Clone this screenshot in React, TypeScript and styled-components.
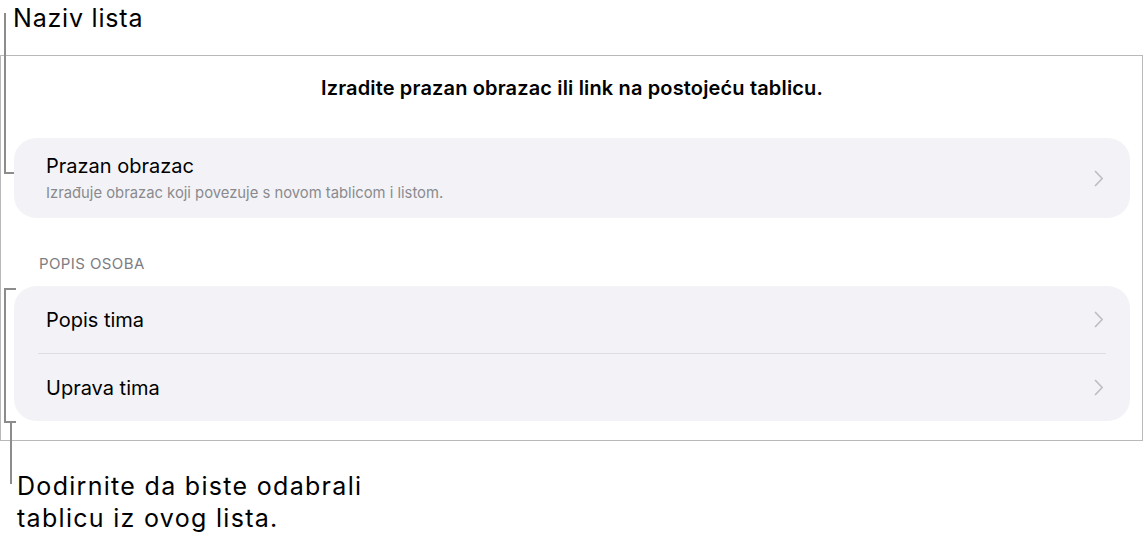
import React from "react";
import styled, { createGlobalStyle } from "styled-components";

const GlobalStyle = createGlobalStyle`
  html, body { margin: 0; padding: 0; background: #ffffff; }
  body { font-family: Inter, "Noto Sans", "Liberation Sans", sans-serif; color: #000; }
`;

const Page = styled.div`
  position: relative;
  width: 1144px;
  height: 537px;
  overflow: hidden;
  display: flex;
  flex-direction: column;
`;

const CalloutTop = styled.div`
  height: 55px;
  box-sizing: border-box;
  padding: 3px 0 0 13px;
  font-size: 25px;
  line-height: 30px;
  letter-spacing: 0.8px;
`;

const CalloutBottom = styled.div`
  padding: 29px 0 0 17px;
  font-size: 25px;
  line-height: 32px;
  letter-spacing: 1.3px;
`;

const Panel = styled.div`
  width: 1143px;
  height: 386px;
  box-sizing: border-box;
  border: 1px solid #b9b9b9;
  padding: 0 12px 0 13px;
  display: flex;
  flex-direction: column;
`;

const Title = styled.div`
  text-align: center;
  font-size: 20px;
  font-weight: 600;
  line-height: 24px;
  margin-top: 20px;
  letter-spacing: 0.15px;
`;

const Card = styled.div`
  background: #f3f3f7;
  border-radius: 22px;
  display: flex;
  flex-direction: column;
`;

const FirstCard = styled(Card)`
  margin-top: 38px;
`;

const Row = styled.div<{ $h: number }>`
  height: ${(p) => p.$h}px;
  display: flex;
  align-items: center;
  padding: 0 26px 0 32px;
`;

const RowText = styled.div`
  flex: 1;
  display: flex;
  flex-direction: column;
`;

const RowTitle = styled.div`
  font-size: 20px;
  line-height: 24px;
`;

const RowSub = styled.div`
  font-size: 14.8px;
  line-height: 18px;
  color: #8a8a8e;
  margin-top: 6px;
`;

const Divider = styled.div`
  height: 1px;
  background: #dedee2;
  margin: 0 24px 0 24px;
`;

const SectionHeader = styled.div`
  font-size: 15px;
  line-height: 18px;
  color: #7d7d82;
  padding-left: 25px;
  margin-top: 37px;
  margin-bottom: 13px;
  letter-spacing: 0.4px;
`;

const Line = styled.div<{ $x: number; $y: number; $w: number; $h: number }>`
  position: absolute;
  left: ${(p) => p.$x}px;
  top: ${(p) => p.$y}px;
  width: ${(p) => p.$w}px;
  height: ${(p) => p.$h}px;
  background: #8c8c8c;
`;

const Chevron = () => (
  <svg width="10" height="17" viewBox="0 0 10 17" fill="none">
    <polyline points="1.5,1.5 8.2,8.5 1.5,15.5" stroke="#bdbdc2" strokeWidth="1.7" strokeLinecap="round" strokeLinejoin="round" />
  </svg>
);

export default function App() {
  return (
    <>
      <GlobalStyle />
      <Page>
        <CalloutTop>Naziv lista</CalloutTop>
        <Panel>
          <Title>Izradite prazan obrazac ili link na postojeću tablicu.</Title>
          <FirstCard>
            <Row $h={80}>
              <RowText>
                <RowTitle>Prazan obrazac</RowTitle>
                <RowSub>Izrađuje obrazac koji povezuje s novom tablicom i listom.</RowSub>
              </RowText>
              <Chevron />
            </Row>
          </FirstCard>
          <SectionHeader>POPIS OSOBA</SectionHeader>
          <Card>
            <Row $h={67}>
              <RowText>
                <RowTitle>Popis tima</RowTitle>
              </RowText>
              <Chevron />
            </Row>
            <Divider />
            <Row $h={67}>
              <RowText>
                <RowTitle>Uprava tima</RowTitle>
              </RowText>
              <Chevron />
            </Row>
          </Card>
        </Panel>
        <CalloutBottom>
          Dodirnite da biste odabrali
          <br />
          tablicu iz ovog lista.
        </CalloutBottom>
        <Line $x={4} $y={13} $w={2} $h={161} />
        <Line $x={4} $y={172} $w={10} $h={2} />
        <Line $x={4} $y={288} $w={2} $h={135} />
        <Line $x={4} $y={288} $w={12} $h={2} />
        <Line $x={4} $y={421} $w={12} $h={2} />
        <Line $x={10} $y={421} $w={2} $h={63} />
      </Page>
    </>
  );
}
